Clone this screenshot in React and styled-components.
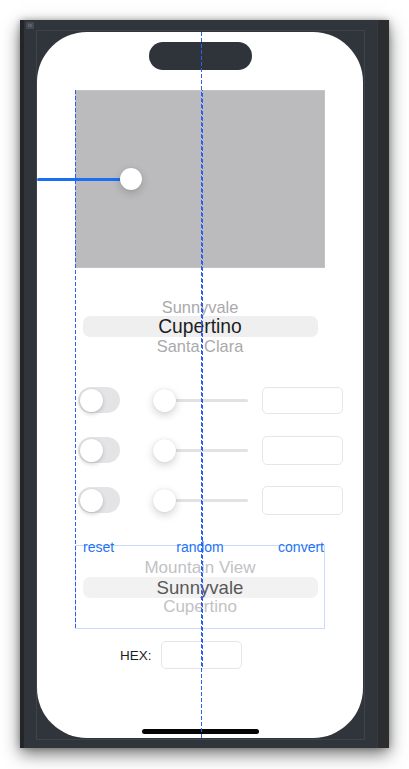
import React from 'react';
import styled, { createGlobalStyle } from 'styled-components';

const Global = createGlobalStyle`
  html, body { margin: 0; padding: 0; background: #ffffff; }
  body { font-family: "Liberation Sans", Arial, sans-serif; overflow: hidden; }
  * { box-sizing: border-box; }
`;

const Page = styled.div`
  width: 409px;
  height: 769px;
  padding: 20px 0 0 20px;
`;

const Window = styled.div`
  width: 369px;
  height: 728px;
  display: flex;
  background: #30343b;
  box-shadow: 0 6px 16px rgba(0, 0, 0, 0.55), 0 0 6px rgba(0, 0, 0, 0.25);
`;

const LeftStrip = styled.div`
  width: 4px;
  background: #242528;
`;

const RightStrip = styled.div`
  width: 12px;
  background: #2c2d2f;
  border-left: 1px solid #363a40;
`;

const Main = styled.div`
  position: relative;
  flex: 1;
  padding: 10px 12px 0 12px;
`;

const CornerIcon = styled.div`
  position: absolute;
  left: 2px;
  top: 2px;
  width: 8px;
  height: 7px;
  background: #464a51;
  border-radius: 1px;
  &::after {
    content: '';
    position: absolute;
    left: 2px;
    top: 2px;
    width: 4px;
    height: 3px;
    background: #5b5f66;
  }
`;

const Outline = styled.div`
  width: 329px;
  height: 710px;
  border: 1px solid #3e424a;
  padding: 1px 1px 1px 0;
`;

const Screen = styled.div`
  position: relative;
  width: 326px;
  height: 706px;
  background: #ffffff;
  border-radius: 50px;
  overflow: hidden;
  display: flex;
  flex-direction: column;
  align-items: center;
`;

const Island = styled.div`
  margin-top: 10px;
  width: 103px;
  height: 28px;
  border-radius: 14px;
  background: #2f333a;
  flex-shrink: 0;
`;

const Stage = styled.div`
  position: relative;
  margin-top: 20px;
  width: 250px;
  height: 178px;
  background: #bbbbbd;
  box-shadow: inset 0 0 0 1px #c3c3c5;
  flex-shrink: 0;
`;

const StageSlider = styled.div`
  position: absolute;
  left: -38px;
  top: 78px;
  display: flex;
  align-items: center;
`;

const BlueTrack = styled.div`
  width: 84px;
  height: 3px;
  background: #1a6ff5;
  border-radius: 2px;
`;

const Thumb = styled.div`
  width: ${(p) => p.$size}px;
  height: ${(p) => p.$size}px;
  border-radius: 50%;
  background: #ffffff;
  flex-shrink: 0;
  box-shadow: 0 3px 8px rgba(0, 0, 0, 0.18), 0 0 1px rgba(0, 0, 0, 0.18);
`;

const PickerWindow = styled.div`
  position: relative;
  width: ${(p) => p.$w}px;
  height: ${(p) => p.$h}px;
  overflow: hidden;
  flex-shrink: 0;
`;

const Band = styled.div`
  position: absolute;
  left: ${(p) => p.$inset}px;
  right: ${(p) => p.$inset - 1}px;
  top: ${(p) => p.$top}px;
  height: 21px;
  border-radius: 7px;
  background: ${(p) => (p.$muted ? '#f2f2f3' : '#efeff0')};
`;

const Wheel = styled.div`
  position: relative;
  z-index: 1;
  display: flex;
  flex-direction: column;
`;

const tones = {
  normal: ['#1d1d1f', '#a9a9ab', '#dcdcde'],
  muted: ['#58585a', '#c2c2c4', '#e2e2e4'],
};

const WheelRow = styled.div`
  height: 19.7px;
  line-height: 19.7px;
  text-align: center;
  white-space: nowrap;
  font-size: ${(p) => (p.$d === 0 ? p.$sel : p.$side)}px;
  color: ${(p) => tones[p.$tone][Math.min(p.$d, 2)]};
  transform: scaleY(${(p) => (p.$d >= 2 ? 0.7 : 1)});
`;

const PickerArea = styled.div`
  margin-top: 23px;
`;

const Controls = styled.div`
  margin-top: 24px;
  align-self: stretch;
  display: flex;
  flex-direction: column;
  gap: 22px;
  padding-left: 41px;
`;

const ControlRow = styled.div`
  display: flex;
  align-items: center;
  height: 28px;
`;

const Toggle = styled.div`
  width: 42px;
  height: 26px;
  border-radius: 13px;
  background: #e4e4e6;
  padding: 1.5px;
  display: flex;
  align-items: center;
  flex-shrink: 0;
`;

const Knob = styled.div`
  width: 23px;
  height: 23px;
  border-radius: 50%;
  background: #ffffff;
  box-shadow: 0 2px 4px rgba(0, 0, 0, 0.18), 0 0 1px rgba(0, 0, 0, 0.12);
`;

const Slider = styled.div`
  margin-left: 33px;
  width: 95px;
  display: flex;
  align-items: center;
`;

const GrayTrack = styled.div`
  flex: 1;
  height: 3px;
  margin-left: -12px;
  background: #e2e2e4;
  border-radius: 2px;
  position: relative;
  z-index: 0;
`;

const SliderThumb = styled(Thumb)`
  position: relative;
  z-index: 1;
`;

const Field = styled.div`
  width: 81px;
  height: ${(p) => p.$h || 28}px;
  border: 1px solid #e6e6e8;
  border-radius: 5px;
  background: #ffffff;
  flex-shrink: 0;
  margin-left: ${(p) => p.$ml || 0}px;
`;

const Buttons = styled.div`
  position: relative;
  z-index: 2;
  margin-top: 25px;
  width: 250px;
  display: grid;
  grid-template-columns: 1fr auto 1fr;
  height: 17px;
  line-height: 17px;
  font-size: 14px;
  color: #1f74f6;
`;

const LinkButton = styled.span`
  justify-self: ${(p) => p.$align};
  padding-left: ${(p) => (p.$align === 'start' ? 8 : 0)}px;
  padding-right: ${(p) => (p.$align === 'end' ? 1 : 0)}px;
`;

const PickerBox = styled.div`
  margin-top: -11px;
  width: 250px;
  border: 1px solid #cadcfa;
  padding: 5px 0 7px 0;
  flex-shrink: 0;
`;

const HexRow = styled.div`
  margin-top: 12px;
  align-self: flex-start;
  margin-left: 83px;
  display: flex;
  align-items: center;
  gap: 9px;
`;

const HexLabel = styled.span`
  font-size: 13.5px;
  color: #1d1d1f;
`;

const HomeBar = styled.div`
  margin-top: auto;
  margin-bottom: 4px;
  width: 117px;
  height: 5px;
  border-radius: 3px;
  background: #050505;
  flex-shrink: 0;
`;

const Guide = styled.div`
  position: absolute;
  z-index: 5;
  left: ${(p) => p.$x}px;
  top: ${(p) => p.$y}px;
  width: 1px;
  height: ${(p) => p.$h}px;
  background: repeating-linear-gradient(
    to bottom,
    #2c5ef5 0 ${(p) => p.$phase}px,
    transparent ${(p) => p.$phase}px ${(p) => p.$phase + 2}px,
    #2c5ef5 ${(p) => p.$phase + 2}px 6px
  );
`;

const cities = ['Mountain View', 'Sunnyvale', 'Cupertino', 'Santa Clara', 'San Jose'];

function Picker({ width, height, center, bandTop, bandInset, selected, tone, sel, side }) {
  const step = 19.7;
  const offset = center - selected * step - step / 2;
  return (
    <PickerWindow $w={width} $h={height}>
      <Band $top={bandTop} $inset={bandInset} $muted={tone === 'muted'} />
      <Wheel style={{ transform: `translateY(${offset}px)` }}>
        {cities.map((c, i) => (
          <WheelRow key={c} $d={Math.abs(i - selected)} $tone={tone} $sel={sel} $side={side}>
            {c}
          </WheelRow>
        ))}
      </Wheel>
    </PickerWindow>
  );
}

function ControlLine({ fieldH }) {
  return (
    <ControlRow>
      <Toggle>
        <Knob />
      </Toggle>
      <Slider>
        <SliderThumb $size={23} />
        <GrayTrack />
      </Slider>
      <Field $ml={14} $h={fieldH} />
    </ControlRow>
  );
}

export default function App() {
  return (
    <>
      <Global />
      <Page>
        <Window>
          <LeftStrip />
          <Main>
            <CornerIcon />
            <Outline>
              <Screen>
                <Island />
                <Stage>
                  <StageSlider>
                    <BlueTrack />
                    <Thumb $size={22} style={{ marginLeft: -1 }} />
                  </StageSlider>
                </Stage>
                <PickerArea>
                  <Picker
                    width={250}
                    height={71}
                    center={36}
                    bandTop={25}
                    bandInset={8}
                    selected={2}
                    tone="normal"
                    sel={19.3}
                    side={16.4}
                  />
                </PickerArea>
                <Controls>
                  <ControlLine fieldH={27} />
                  <ControlLine fieldH={29} />
                  <ControlLine fieldH={29} />
                </Controls>
                <Buttons>
                  <LinkButton $align="start">reset</LinkButton>
                  <LinkButton $align="center">random</LinkButton>
                  <LinkButton $align="end">convert</LinkButton>
                </Buttons>
                <PickerBox>
                  <Picker
                    width={248}
                    height={70}
                    center={36.5}
                    bandTop={26}
                    bandInset={7}
                    selected={1}
                    tone="muted"
                    sel={18.6}
                    side={17}
                  />
                </PickerBox>
                <HexRow>
                  <HexLabel>HEX:</HexLabel>
                  <Field $h={28} />
                </HexRow>
                <HomeBar />
                <Guide $x={164} $y={0} $h={706} $phase={4} />
                <Guide $x={165} $y={58} $h={578} $phase={1} />
                <Guide $x={38} $y={58} $h={538} $phase={4} />
              </Screen>
            </Outline>
          </Main>
          <RightStrip />
        </Window>
      </Page>
    </>
  );
}
